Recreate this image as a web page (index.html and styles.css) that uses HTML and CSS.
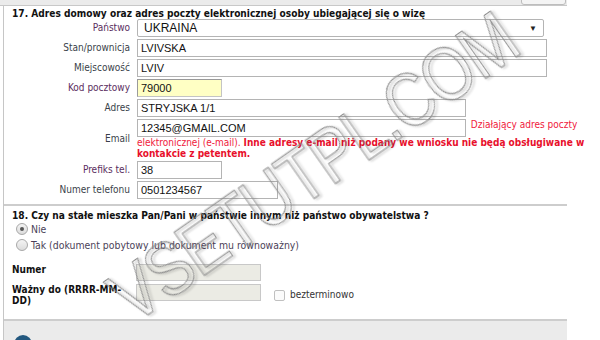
FILE: index.html
```html
<!DOCTYPE html>
<html lang="pl">
<head>
    <meta charset="UTF-8">
    <link rel="stylesheet" href="styles.css">
</head>
<body>
<div class="topbar"><span class="topbar-tab"></span></div>
<div class="page">
    <div class="section">
        <div class="section-title">17. Adres domowy oraz adres poczty elektronicznej osoby ubiegającej się o wizę</div>
        <div class="fields">
            <label class="lbl req">Państwo</label>
            <div class="val">
                <div class="select"><span>UKRAINA</span><span class="arrow">&#9660;</span></div>
            </div>

            <label class="lbl">Stan/prownicja</label>
            <div class="val"><input class="txt w-full" type="text" value="LVIVSKA"></div>

            <label class="lbl">Miejscowość</label>
            <div class="val"><input class="txt w-full" type="text" value="LVIV"></div>

            <label class="lbl req">Kod pocztowy</label>
            <div class="val"><input class="txt w-short active" type="text" value="79000"></div>

            <label class="lbl">Adres</label>
            <div class="val"><input class="txt w-mid" type="text" value="STRYJSKA 1/1"></div>

            <label class="lbl">Email</label>
            <div class="val email">
                <input class="txt w-mid" type="text" value="12345@GMAIL.COM">
                <span class="hint">Działający adres poczty elektronicznej (e-mail). <b>Inne adresy e-mail niż podany we wniosku nie będą obsługiwane w kontakcie z petentem.</b></span>
            </div>

            <label class="lbl req">Prefiks tel.</label>
            <div class="val"><input class="txt w-short" type="text" value="38"></div>

            <label class="lbl">Numer telefonu</label>
            <div class="val"><input class="txt w-phone" type="text" value="0501234567"></div>
        </div>
    </div>

    <div class="section section-18">
        <div class="section-title">18. Czy na stałe mieszka Pan/Pani w państwie innym niż państwo obywatelstwa ?</div>
        <div class="radio-row"><span class="radio checked"></span><span class="radio-label">Nie</span></div>
        <div class="radio-row"><span class="radio"></span><span class="radio-label">Tak (dokument pobytowy lub dokument mu równoważny)</span></div>
        <div class="doc-fields">
            <div class="doc-lbl">Numer</div>
            <div class="doc-val"><input class="txt w-doc" type="text" disabled></div>
            <div class="doc-lbl">Ważny do (RRRR-MM-DD)</div>
            <div class="doc-val">
                <input class="txt w-doc" type="text" disabled>
                <span class="checkbox"></span>
                <span class="check-label">bezterminowo</span>
            </div>
        </div>
    </div>

    <div class="footer"><span class="info-icon"></span></div>
</div>
<div class="watermark">VSETUTPL.COM</div>
</body>
</html>
```

FILE: styles.css
```css
body {
    margin: 0;
    background-color: #ffffff;
    font-family: "DejaVu Sans Condensed", "DejaVu Sans", sans-serif;
    font-stretch: condensed;
    font-size: 10px;
    color: #222222;
    overflow: hidden;
}

.topbar {
    position: relative;
    width: 567px;
    height: 5px;
    background-color: #ebebeb;
    border-bottom: 1px solid #c8c8c8;
}

.topbar-tab {
    position: absolute;
    left: 521px;
    top: -1px;
    width: 43px;
    height: 4px;
    background-color: #f4f4f4;
    border: 1px solid #bdbdbd;
    border-radius: 0 0 3px 3px;
}

.page {
    width: 563px;
    margin-left: 3px;
    border-left: 1px solid #c6c6c6;
}

.section-title {
    padding: 1px 0 0 8px;
    height: 12px;
    line-height: 13px;
    font-size: 10.1px;
    font-weight: bold;
    color: #111111;
}

.fields {
    display: grid;
    grid-template-columns: 126px 462px;
    column-gap: 7px;
    row-gap: 2px;
    padding-bottom: 5px;
}

.lbl {
    align-self: center;
    text-align: right;
    color: #3a3f4a;
    line-height: 12px;
}

.lbl.req {
    color: #5a2e5e;
}

.val {
    height: 18px;
}

.txt {
    box-sizing: border-box;
    height: 18px;
    margin: 0;
    padding: 0 3px;
    border: 1px solid #b4b4b4;
    background-color: #ffffff;
    font-family: "Liberation Sans", Arial, sans-serif;
    font-size: 11px;
    color: #111111;
    vertical-align: top;
}

.txt.active {
    background-color: #ffffc4;
    border-color: #9a9a9a #c4c4c4 #c4c4c4 #9a9a9a;
}

.w-full {
    width: 410px;
}

.w-mid {
    width: 329px;
}

.w-short {
    width: 85px;
}

.w-phone {
    width: 141px;
}

.select {
    box-sizing: border-box;
    width: 407px;
    height: 18px;
    padding: 0 6px 0 6px;
    display: flex;
    align-items: center;
    justify-content: space-between;
    border: 1px solid #b4b4b4;
    border-radius: 2px;
    font-family: "Liberation Sans", Arial, sans-serif;
    font-size: 12px;
    color: #111111;
}

.select .arrow {
    font-size: 8px;
    color: #222222;
}

.val.email {
    height: auto;
    line-height: 11px;
}

.email .txt {
    margin-right: 2px;
}

.hint {
    color: #f0203c;
}

.hint b {
    color: #e8102c;
}

.email .hint {
    line-height: 11px;
}

.section-18 {
    border-top: 2px solid #cdcdcd;
    padding-top: 2px;
    height: 111px;
}

.radio-row {
    display: flex;
    align-items: center;
    height: 16px;
    padding-left: 12px;
}

.radio {
    box-sizing: border-box;
    width: 12px;
    height: 12px;
    margin-right: 3px;
    border: 1px solid #a8a8a8;
    border-radius: 50%;
    background: linear-gradient(#f4f4f4, #dcdcdc);
    position: relative;
}

.radio.checked::after {
    content: "";
    position: absolute;
    left: 3px;
    top: 3px;
    width: 4px;
    height: 4px;
    border-radius: 50%;
    background-color: #555555;
}

.radio-label {
    font-size: 10.4px;
    color: #4b3f58;
}

.doc-fields {
    display: grid;
    grid-template-columns: 116px auto;
    column-gap: 8px;
    row-gap: 3px;
    padding: 11px 0 0 8px;
}

.doc-lbl {
    font-weight: bold;
    color: #111111;
    line-height: 11px;
}

.doc-val {
    display: flex;
    align-items: center;
    height: 17px;
}

.w-doc {
    width: 125px;
    height: 17px;
    background-color: #ebebe4;
    border-color: #c8c8c8;
}

.checkbox {
    box-sizing: border-box;
    width: 11px;
    height: 11px;
    margin: 5px 5px 0 13px;
    border: 1px solid #c0c0c0;
    border-radius: 2px;
    background-color: #fbfbfb;
}

.check-label {
    margin-top: 4px;
    color: #333333;
}

.footer {
    height: 22px;
    border-top: 2px solid #cdcdcd;
    background-color: #ebebeb;
    overflow: hidden;
}

.info-icon {
    display: block;
    width: 18px;
    height: 18px;
    margin: 14px 0 0 10px;
    border-radius: 50%;
    background-color: #23587f;
}

.watermark {
    position: absolute;
    left: 313px;
    top: 167px;
    transform: translate(-50%, -50%) rotate(-35deg) scale(0.84, 1);
    font-family: "Liberation Sans", Arial, sans-serif;
    font-size: 76px;
    letter-spacing: -2px;
    white-space: nowrap;
    color: transparent;
    -webkit-text-stroke: 1px #8c8c8c;
    filter: drop-shadow(2px 2px 1px rgba(0, 0, 0, 0.3));
    pointer-events: none;
}
```
